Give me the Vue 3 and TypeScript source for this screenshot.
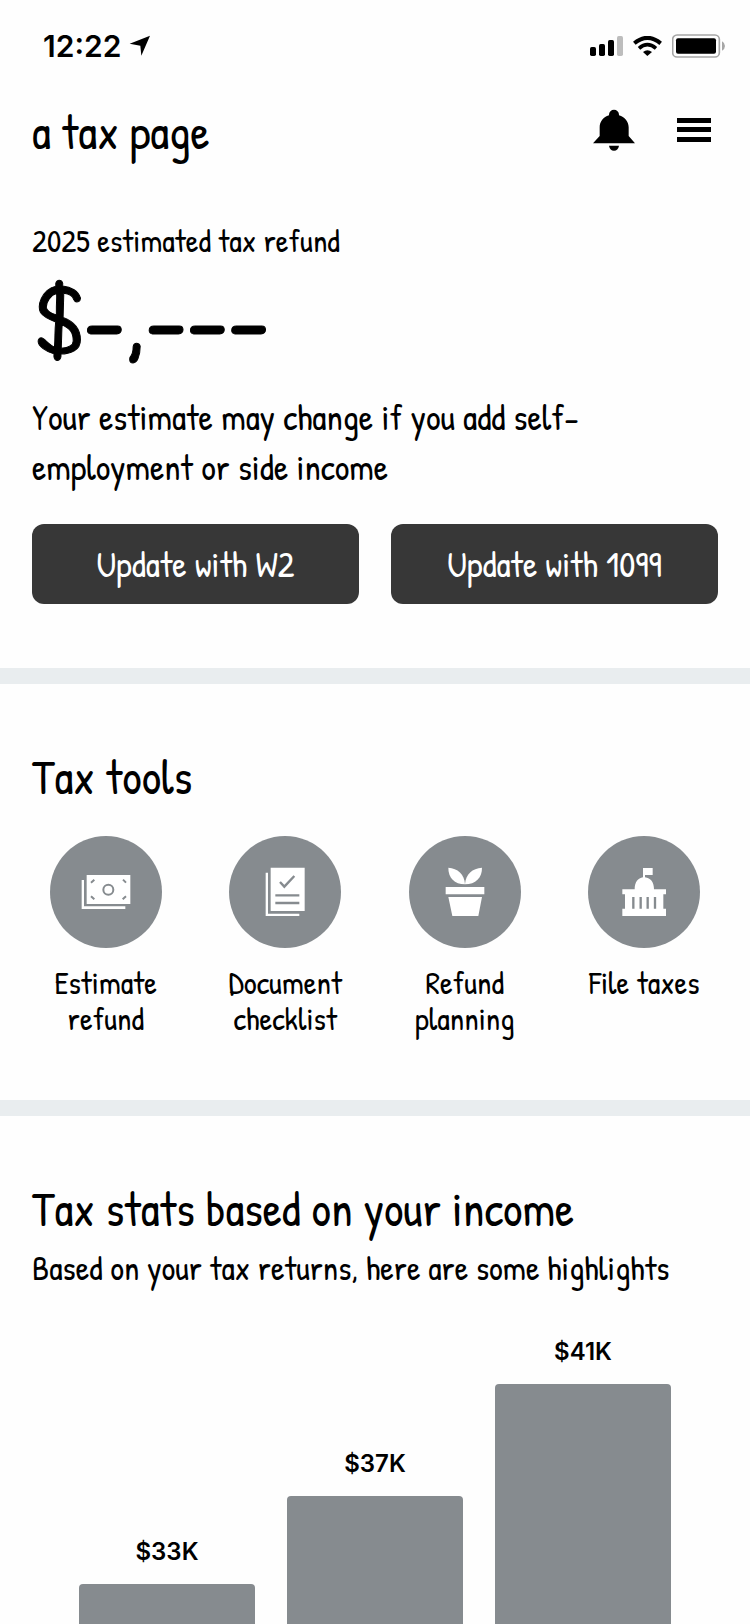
<script setup lang="ts">
interface Stat {
  label: string
  height: number
}

const tools: { id: string; label: string }[] = [
  { id: 'estimate', label: 'Estimate refund' },
  { id: 'checklist', label: 'Document checklist' },
  { id: 'planning', label: 'Refund planning' },
  { id: 'file', label: 'File taxes' },
]

const stats: Stat[] = [
  { label: '$33K', height: 40 },
  { label: '$37K', height: 128 },
  { label: '$41K', height: 240 },
]
</script>

<template>
  <div class="page">
    <div class="status">
      <div class="clock">
        <span>12:22</span>
        <svg width="22" height="22" viewBox="0 0 66 66" aria-hidden="true">
          <path d="M63 2 2 26 34 32 37 62Z" />
        </svg>
      </div>
      <div class="signals">
        <svg width="33" height="20" viewBox="0 0 99 60" aria-hidden="true">
          <rect x="0" y="33" width="18" height="27" rx="5" />
          <rect x="27" y="24" width="18" height="36" rx="5" />
          <rect x="54" y="12" width="18" height="48" rx="5" />
          <rect x="81" y="0" width="18" height="60" rx="5" fill="#bdbdbd" />
        </svg>
        <svg width="29" height="20" viewBox="0 0 87 60" aria-hidden="true">
          <path d="M4 22Q43-11 83 22" fill="none" stroke="#000" stroke-width="12" />
          <path d="M18 37Q43 15 69 37" fill="none" stroke="#000" stroke-width="11" />
          <path d="M30 48Q43 37 57 48L43 60Z" />
        </svg>
        <svg width="53" height="24" viewBox="0 0 159 72" aria-hidden="true">
          <rect x="2" y="3" width="140" height="66" rx="13" fill="none" stroke="#a6a6a6" stroke-width="5" />
          <rect x="12" y="13" width="120" height="46" rx="6" />
          <path d="M150 22Q159 27 159 36T150 50Z" fill="#a6a6a6" />
        </svg>
      </div>
    </div>

    <header class="header">
      <h1>a tax page</h1>
      <div class="actions">
        <button type="button" class="icon-button" aria-label="Notifications">
          <svg width="42" height="42" viewBox="0 0 126 126" aria-hidden="true">
            <path d="M0 103 20 81V55C20 38 31 24 48 19V17A15 15 0 0 1 78 17V19C95 24 107 38 107 55V81L126 103Z" />
            <path d="M48 110H78C76 120 71 125 63 125S50 120 48 110Z" />
          </svg>
        </button>
        <button type="button" class="icon-button" aria-label="Menu">
          <svg width="34" height="24" viewBox="0 0 34 24" aria-hidden="true">
            <path d="M0 0H34V5H0ZM0 9H34V14H0ZM0 19H34V24H0Z" />
          </svg>
        </button>
      </div>
    </header>

    <main>
      <section class="hero">
        <p class="label">2025 estimated tax refund</p>
        <p class="amount">$-,---</p>
        <p class="note">Your estimate may change if you add self-employment or side income</p>
        <div class="buttons">
          <button type="button">Update with W2</button>
          <button type="button">Update with 1099</button>
        </div>
      </section>

      <section class="tools">
        <h2>Tax tools</h2>
        <nav class="tool-grid" aria-label="Tax tools">
          <a v-for="tool in tools" :key="tool.id" class="tool" href="#">
            <span class="disc">
              <svg width="56" height="56" viewBox="0 0 168 168" aria-hidden="true">
                <template v-if="tool.id === 'estimate'">
                  <path d="M26 33H157V120H26ZM11 48H18V127H142V135H11Z" />
                  <g class="cut" stroke-width="6">
                    <circle cx="91" cy="77" r="15" />
                    <path d="M39 56 49 47M135 47 144 56M39 97 49 106M144 97 134 106" />
                  </g>
                </template>
                <template v-else-if="tool.id === 'checklist'">
                  <path d="M41 11H143V141H41ZM26 26H33V149H127V156H26Z" />
                  <g class="cut" stroke-width="7">
                    <path d="M69 54 82 68 112 36M55 94H127M55 117H127" />
                  </g>
                </template>
                <template v-else-if="tool.id === 'planning'">
                  <path d="M34 11C62 13 82 30 84 61C52 60 34 42 34 11Z" />
                  <path d="M135 11C106 13 86 30 84 61C116 60 135 42 135 11Z" />
                  <path d="M26 69H142V91H26ZM34 99H135L124 156H46Z" />
                </template>
                <template v-else>
                  <path d="M81 12H110V33H87V40C104 42 114 54 114 76H150V91H142V134H150V156H19V134H27V91H19V76H56C56 54 66 42 81 40Z" />
                  <path class="cut" stroke-width="7" d="M52 99V134M74 99V134M95 99V134M117 99V134" />
                </template>
              </svg>
            </span>
            <span class="tool-label">{{ tool.label }}</span>
          </a>
        </nav>
      </section>

      <section class="stats">
        <h2>Tax stats based on your income</h2>
        <p class="subtitle">Based on your tax returns, here are some highlights</p>
        <div class="chart">
          <div v-for="stat in stats" :key="stat.label" class="column">
            <span class="value">{{ stat.label }}</span>
            <div class="bar" :style="{ height: stat.height + 'px' }"></div>
          </div>
        </div>
      </section>
    </main>
  </div>
</template>

<style>
body {
  margin: 0;
  background: #fefefe;
}
</style>

<style scoped>
.page {
  color: #000;
  font-family: "Patrick Hand", Lato, "Open Sans", sans-serif;
}

h1,
h2,
p {
  margin: 0;
  font-weight: 400;
}

h1,
h2 {
  font-size: 48px;
  line-height: 56px;
}

svg {
  display: block;
}

button {
  border: 0;
  padding: 0;
  font: inherit;
  cursor: pointer;
}

.status {
  display: flex;
  align-items: center;
  justify-content: space-between;
  height: 92px;
  padding: 0 25px 0 43px;
}

.clock {
  display: flex;
  align-items: center;
  gap: 8px;
  font: 600 30px/36px Inter, sans-serif;
}

.signals {
  display: flex;
  align-items: center;
  gap: 10px;
}

.header {
  display: flex;
  align-items: center;
  justify-content: space-between;
  height: 80px;
  padding: 0 32px;
}

.actions {
  display: flex;
  gap: 32px;
  margin-bottom: 4px;
}

.icon-button {
  display: flex;
  align-items: center;
  justify-content: center;
  width: 48px;
  height: 48px;
  background: none;
}

.hero {
  padding: 51px 32px 64px;
}

.label {
  font-size: 32px;
  line-height: 36px;
}

.amount {
  margin-top: 10px;
  font-size: 102px;
  line-height: 96px;
  -webkit-text-stroke: 1px currentColor;
}

.note {
  margin-top: 27px;
  font-size: 36px;
  line-height: 50px;
}

.buttons {
  display: grid;
  grid-template-columns: 1fr 1fr;
  gap: 32px;
  margin-top: 32px;
}

.buttons button {
  height: 80px;
  padding-bottom: 2px;
  border-radius: 12px;
  background: #373737;
  color: #fff;
  font-size: 36px;
}

.tools,
.stats {
  border-top: 16px solid #e9edef;
  padding-top: 65px;
}

.tools {
  padding-bottom: 63px;
}

.tools h2,
.stats h2,
.subtitle {
  padding: 0 32px;
}

.tool-grid {
  display: grid;
  grid-template-columns: repeat(4, 1fr);
  margin-top: 31px;
  padding: 0 16px;
}

.tool {
  display: flex;
  flex-direction: column;
  align-items: center;
  color: inherit;
  text-decoration: none;
}

.disc {
  display: flex;
  align-items: center;
  justify-content: center;
  width: 112px;
  height: 112px;
  border-radius: 50%;
  background: #868b8f;
}

.disc svg {
  fill: #fff;
}

.disc .cut {
  fill: none;
  stroke: #868b8f;
}

.tool-label {
  max-width: 140px;
  margin-top: 17px;
  font-size: 32px;
  line-height: 36px;
  text-align: center;
}

.subtitle {
  margin-top: 11px;
  font-size: 34px;
  line-height: 40px;
}

.chart {
  display: grid;
  grid-template-columns: repeat(3, 1fr);
  align-items: end;
  gap: 32px;
  padding: 48px 79px 0;
}

.column {
  display: flex;
  flex-direction: column;
  gap: 16px;
}

.value {
  font: 600 24px/32px Inter, sans-serif;
  text-align: center;
}

.bar {
  border-radius: 4px 4px 0 0;
  background: #868b8f;
}
</style>
